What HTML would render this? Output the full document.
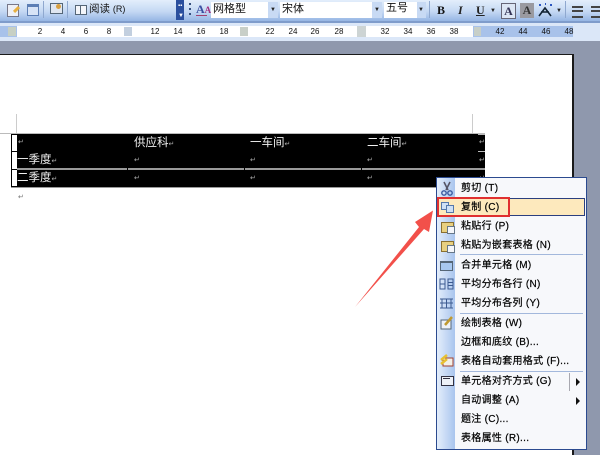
<!DOCTYPE html>
<html><head><meta charset="utf-8">
<style>
html,body{margin:0;padding:0;background:#8f98ad}
#r{position:relative;width:600px;height:455px;overflow:hidden;background:#8f98ad;font-family:"Liberation Sans","Noto Sans CJK SC",sans-serif;filter:blur(.35px)}
#r div,#r span{position:absolute;white-space:nowrap}
.n{font-size:8px;color:#111;top:26px;width:16px;text-align:center;line-height:11px}
.m{left:461px;font-size:10px;line-height:14px;color:#000;letter-spacing:.3px;-webkit-text-stroke:.2px #000}
.sep{left:460px;width:123px;height:1px;background:#a3b8dc}
.t{font-size:11.5px;color:#f0f0f0;line-height:14px}
.ret{font-size:7px;color:#aaa;line-height:8px}
.tb{font-size:11px;color:#111;line-height:14px}
.ic{width:11px;height:9px;background:#e8d080;border:1px solid #8a7030;left:441px}
</style></head><body>
<div id="r">
<!-- toolbar -->
<div style="left:0;top:0;width:600px;height:21px;background:linear-gradient(#e3eefb,#c4d8f3 55%,#96b6e4)"></div>
<div style="left:0;top:21px;width:600px;height:2px;background:#7f9ccb"></div>
<div style="left:176px;top:0;width:8px;height:20px;background:#2a4f9e"></div>
<div style="left:178px;top:3px;font-size:6px;color:#fff;line-height:6px">▪▪</div>
<div style="left:178px;top:13px;font-size:6px;color:#fff;line-height:6px">▼</div>
<div style="left:189px;top:3px;width:2px;height:2px;background:#35507f"></div>
<div style="left:189px;top:8px;width:2px;height:2px;background:#35507f"></div>
<div style="left:189px;top:13px;width:2px;height:2px;background:#35507f"></div>
<!-- left icons -->
<div style="left:7px;top:4px;width:10px;height:11px;background:#eef0f6;border:1px solid #778"></div>
<div style="left:13px;top:8px;width:7px;height:3px;background:#e8b040;transform:rotate(-45deg)"></div>
<div style="left:27px;top:4px;width:10px;height:8px;background:#d8e4f6;border:1px solid #5d7fb5;border-top:3px solid #5d7fb5"></div>
<div style="left:43px;top:1px;width:1px;height:17px;background:#8fa8cf"></div>
<div style="left:50px;top:3px;width:11px;height:9px;background:#dfe6f0;border:1px solid #567"></div>
<div style="left:56px;top:4px;width:5px;height:5px;background:#d8a040;border-radius:3px"></div>
<div style="left:67px;top:1px;width:1px;height:17px;background:#8fa8cf"></div>
<div style="left:75px;top:5px;width:5px;height:8px;background:#f4f6fa;border:1px solid #567"></div>
<div style="left:80px;top:5px;width:5px;height:8px;background:#f4f6fa;border:1px solid #567"></div>
<div class="tb" style="left:89px;top:2px;font-size:10.5px">阅读 <span style="position:static;font-size:9px">(R)</span></div>
<!-- style A -->
<div style="left:196px;top:2px;font:bold 12px 'Liberation Serif',serif;color:#3a4fa0;line-height:15px">A<span style="position:static;color:#a03080;font-size:9px">A</span></div>
<div style="left:196px;top:15px;width:11px;height:1px;background:#a04070"></div>
<!-- combos -->
<div style="left:211px;top:2px;width:57px;height:16px;background:#fff"></div>
<div class="tb" style="left:213px;top:2px">网格型</div>
<div style="left:268px;top:2px;width:10px;height:16px;background:#c8daf4"></div>
<div style="left:270px;top:6px;font-size:6px;color:#222;line-height:8px">▼</div>
<div style="left:280px;top:2px;width:92px;height:16px;background:#fff"></div>
<div class="tb" style="left:282px;top:2px">宋体</div>
<div style="left:372px;top:2px;width:10px;height:16px;background:#c8daf4"></div>
<div style="left:374px;top:6px;font-size:6px;color:#222;line-height:8px">▼</div>
<div style="left:384px;top:2px;width:33px;height:16px;background:#fff"></div>
<div class="tb" style="left:386px;top:1px">五号</div>
<div style="left:417px;top:2px;width:9px;height:16px;background:#c8daf4"></div>
<div style="left:418px;top:6px;font-size:6px;color:#222;line-height:8px">▼</div>
<div style="left:429px;top:1px;width:1px;height:17px;background:#8fa8cf"></div>
<div style="left:437px;top:2px;font:bold 12px/16px 'Liberation Serif',serif;color:#111">B</div>
<div style="left:458px;top:2px;font:italic bold 12px/16px 'Liberation Serif',serif;color:#222">I</div>
<div style="left:476px;top:2px;font:bold 12px/16px 'Liberation Serif',serif;color:#222;text-decoration:underline">U</div>
<div style="left:490px;top:7px;font-size:6px;color:#222;line-height:8px">▼</div>
<div style="left:501px;top:3px;width:13px;height:14px;background:#dce6f4;border:1px solid #667;font:bold 12px/14px 'Liberation Serif',serif;color:#335;text-align:center">A</div>
<div style="left:520px;top:3px;width:14px;height:15px;background:#9a9aa0;font:bold 12px/15px 'Liberation Serif',serif;color:#333;text-align:center">A</div>
<svg style="position:absolute;left:537px;top:2px" width="16" height="16"><path d="M2 14L8 6L14 14M4 10H12" stroke="#123" stroke-width="1.6" fill="none"/><path d="M2 3h2M8 2h1M13 3h2" stroke="#2a55c0" stroke-width="2"/></svg>
<div style="left:556px;top:7px;font-size:6px;color:#222;line-height:8px">▼</div>
<div style="left:565px;top:1px;width:1px;height:17px;background:#8fa8cf"></div>
<div style="left:572px;top:6px;width:11px;height:8px;border-top:2px solid #444;border-bottom:2px solid #444"></div>
<div style="left:572px;top:10px;width:11px;height:2px;background:#444"></div>
<div style="left:591px;top:6px;width:9px;height:8px;border-top:2px solid #444;border-bottom:2px solid #444"></div>
<div style="left:591px;top:10px;width:9px;height:2px;background:#444"></div>
<!-- ruler -->
<div style="left:0;top:23px;width:600px;height:18px;background:#dbe7f8"></div>
<div style="left:17px;top:26px;width:456px;height:11px;background:#fff"></div>
<div style="left:0;top:26px;width:17px;height:11px;background:#a8c2ea"></div>
<div style="left:473px;top:26px;width:100px;height:11px;background:#a8c2ea"></div>
<div style="left:8px;top:27px;width:8px;height:9px;background:#c7d0c4"></div>
<div style="left:124px;top:27px;width:8px;height:9px;background:#c2cfdf"></div>
<div style="left:240px;top:27px;width:8px;height:9px;background:#c8cfc8"></div>
<div style="left:357px;top:26px;width:9px;height:11px;background:#cdd4d4"></div>
<div style="left:474px;top:27px;width:7px;height:9px;background:#c7cfc8"></div>
<div class="n" style="left:32px">2</div><div class="n" style="left:55px">4</div><div class="n" style="left:78px">6</div><div class="n" style="left:101px">8</div>
<div class="n" style="left:147px">12</div><div class="n" style="left:170px">14</div><div class="n" style="left:193px">16</div><div class="n" style="left:216px">18</div>
<div class="n" style="left:262px">22</div><div class="n" style="left:285px">24</div><div class="n" style="left:307px">26</div><div class="n" style="left:331px">28</div>
<div class="n" style="left:377px">32</div><div class="n" style="left:400px">34</div><div class="n" style="left:423px">36</div><div class="n" style="left:446px">38</div>
<div class="n" style="left:492px">42</div><div class="n" style="left:515px">44</div><div class="n" style="left:538px">46</div><div class="n" style="left:561px">48</div>
<!-- page -->
<div style="left:0;top:54px;width:572px;height:401px;background:#fff;border-top:1px solid #1a1a1a"></div>
<div style="left:572px;top:54px;width:2px;height:401px;background:#1a1a1a"></div>
<!-- crop marks -->
<div style="left:16px;top:114px;width:1px;height:20px;background:#ccc"></div>
<div style="left:472px;top:114px;width:1px;height:20px;background:#ccc"></div>
<div style="left:0;top:133px;width:485px;height:1px;background:#bbb"></div>
<!-- table -->
<div style="left:11px;top:134px;width:474px;height:53px;background:#000"></div>
<div style="left:12px;top:135px;width:5px;height:16px;background:#fff"></div>
<div style="left:12px;top:152px;width:5px;height:17px;background:#fff"></div>
<div style="left:12px;top:170px;width:5px;height:16px;background:#fff"></div>
<div style="left:11px;top:187px;width:474px;height:1px;background:#999"></div>
<div style="left:17px;top:168px;width:468px;height:2px;background:#9a9a9a"></div>
<div style="left:127px;top:168px;width:1px;height:2px;background:#000"></div>
<div style="left:244px;top:168px;width:1px;height:2px;background:#000"></div>
<div style="left:361px;top:168px;width:1px;height:2px;background:#000"></div>
<div style="left:478px;top:151px;width:7px;height:1px;background:#bbb"></div>
<div style="left:478px;top:134px;width:7px;height:1px;background:#bbb"></div>
<div class="ret" style="left:18px;top:139px">↵</div>
<div class="t" style="left:134px;top:136px">供应科<span class="ret" style="position:static">↵</span></div>
<div class="t" style="left:250px;top:136px">一车间<span class="ret" style="position:static">↵</span></div>
<div class="t" style="left:367px;top:136px">二车间<span class="ret" style="position:static">↵</span></div>
<div class="ret" style="left:479px;top:139px">↵</div>
<div class="t" style="left:17px;top:153px">一季度<span class="ret" style="position:static">↵</span></div>
<div class="ret" style="left:134px;top:157px">↵</div><div class="ret" style="left:250px;top:157px">↵</div><div class="ret" style="left:367px;top:157px">↵</div><div class="ret" style="left:479px;top:157px">↵</div>
<div class="t" style="left:17px;top:171px">二季度<span class="ret" style="position:static">↵</span></div>
<div class="ret" style="left:134px;top:175px">↵</div><div class="ret" style="left:250px;top:175px">↵</div><div class="ret" style="left:367px;top:175px">↵</div><div class="ret" style="left:479px;top:175px">↵</div>
<div class="ret" style="left:18px;top:194px;color:#777">↵</div>
<!-- arrow -->
<svg style="position:absolute;left:340px;top:200px" width="100" height="120"><path d="M15 107L79 27L75 22L93 10.500L89 32L84 29Z" fill="#f2504a"/></svg>
<!-- menu -->
<div style="left:436px;top:177px;width:151px;height:273px;background:#f7f8fb;border:1px solid #2b4a8f;box-sizing:border-box"></div>
<div style="left:437px;top:178px;width:18px;height:271px;background:linear-gradient(90deg,#e4eefb,#a9c5ee)"></div>
<div style="left:437px;top:198px;width:148px;height:18px;background:#fde9bd;border:1px solid #2b3f7f;box-sizing:border-box"></div>
<div style="left:437px;top:197px;width:73px;height:20px;border:2px solid #e03030;box-sizing:border-box"></div>
<svg style="position:absolute;left:440px;top:181px" width="14" height="15"><path d="M4 1L8 9M10 1L6 9" stroke="#556" stroke-width="1.6"/><circle cx="4" cy="12" r="2.2" fill="none" stroke="#3a5aa0" stroke-width="1.4"/><circle cx="10" cy="12" r="2.2" fill="none" stroke="#3a5aa0" stroke-width="1.4"/></svg>
<div style="left:441px;top:202px;width:6px;height:6px;background:#cfe0f5;border:1px solid #5577aa"></div>
<div style="left:446px;top:205px;width:6px;height:6px;background:#cfe0f5;border:1px solid #5577aa"></div>
<div class="ic" style="top:222px"></div><div style="left:447px;top:226px;width:6px;height:6px;background:#f4f6fa;border:1px solid #678"></div>
<div class="ic" style="top:241px"></div><div style="left:447px;top:245px;width:6px;height:6px;background:#f4f6fa;border:1px solid #678"></div>
<div style="left:440px;top:261px;width:11px;height:7px;background:#a8c8f0;border:1px solid #567;border-top:2px solid #567"></div>
<svg style="position:absolute;left:439px;top:277px" width="15" height="14"><path d="M1 2H6V12H1ZM1 7H6M9 2H14V12H9ZM9 5.500H14M9 8.500H14" fill="none" stroke="#3c5a90"/></svg>
<svg style="position:absolute;left:439px;top:296px" width="15" height="14"><path d="M1 3H14M1 7H14M1 12H14M3 3V12M7.500 3V12M12 3V12" fill="none" stroke="#3c5a90"/></svg>
<svg style="position:absolute;left:440px;top:316px" width="14" height="14"><rect x="1" y="4" width="10" height="9" fill="#eef2f8" stroke="#567"/><path d="M5 9L12 1" stroke="#c09a30" stroke-width="2.500"/></svg>
<svg style="position:absolute;left:440px;top:354px" width="14" height="13"><rect x="3" y="4" width="10" height="8" fill="#f3f0e8" stroke="#a04030"/><path d="M1 6L7 1M1 10L7 5" stroke="#e8c030" stroke-width="2.500"/></svg>
<div style="left:441px;top:376px;width:11px;height:8px;background:#eef2f8;border:1px solid #334"></div>
<div style="left:443px;top:378px;width:7px;height:1px;background:#334"></div>
<div class="sep" style="top:254px"></div><div class="sep" style="top:313px"></div><div class="sep" style="top:371px"></div>
<div style="left:569px;top:373px;width:1px;height:18px;background:#a8a8b0"></div>
<div style="left:576px;top:378px;width:0;height:0;border-left:4px solid #111;border-top:4px solid transparent;border-bottom:4px solid transparent"></div>
<div style="left:576px;top:397px;width:0;height:0;border-left:4px solid #111;border-top:4px solid transparent;border-bottom:4px solid transparent"></div>
<div class="m" style="top:182px">剪切 (T)</div>
<div class="m" style="top:201px">复制 (C)</div>
<div class="m" style="top:220px">粘贴行 (P)</div>
<div class="m" style="top:239px">粘贴为嵌套表格 (N)</div>
<div class="m" style="top:259px">合并单元格 (M)</div>
<div class="m" style="top:278px">平均分布各行 (N)</div>
<div class="m" style="top:297px">平均分布各列 (Y)</div>
<div class="m" style="top:317px">绘制表格 (W)</div>
<div class="m" style="top:336px">边框和底纹 (B)...</div>
<div class="m" style="top:355px">表格自动套用格式 (F)...</div>
<div class="m" style="top:375px">单元格对齐方式 (G)</div>
<div class="m" style="top:394px">自动调整 (A)</div>
<div class="m" style="top:413px">题注 (C)...</div>
<div class="m" style="top:432px">表格属性 (R)...</div>
</div>
</body></html>
